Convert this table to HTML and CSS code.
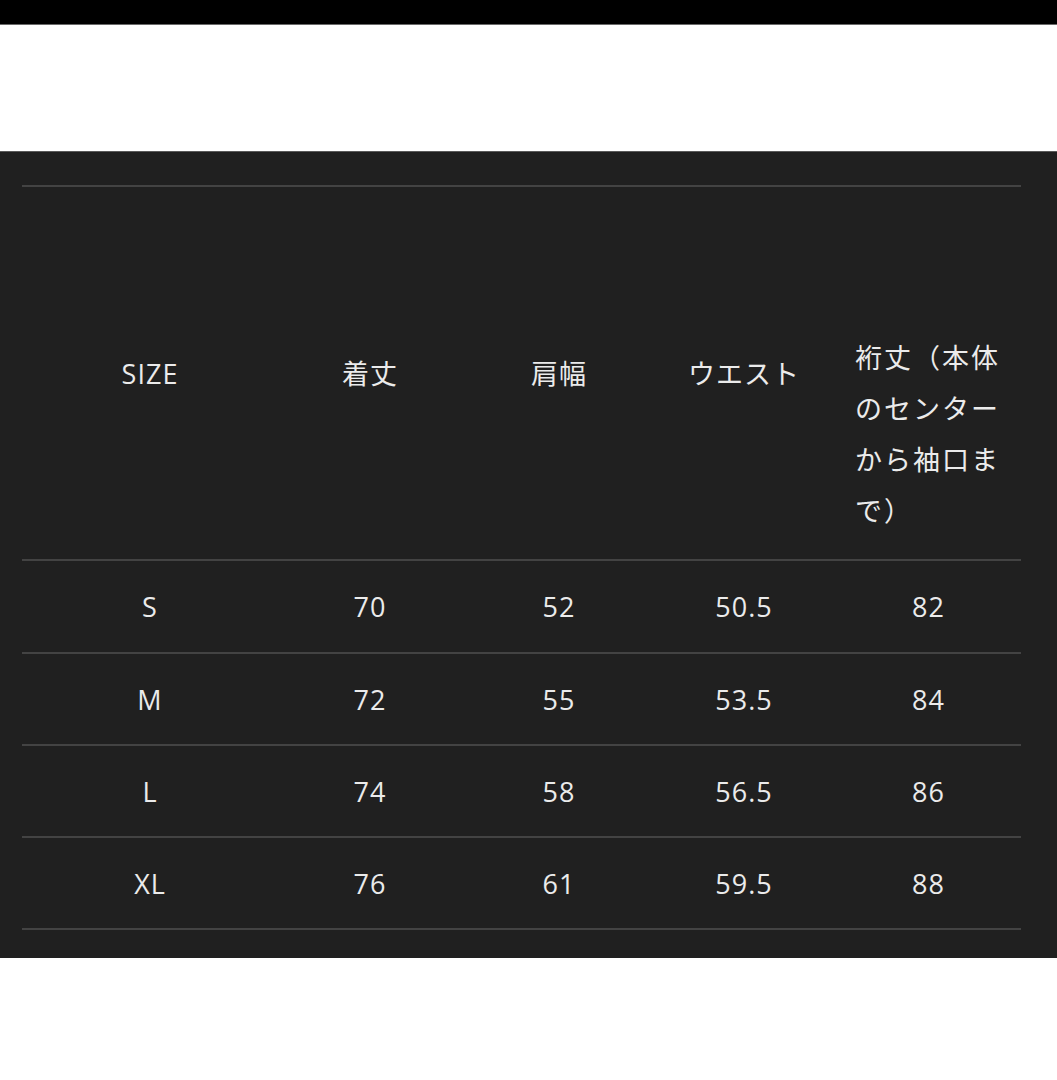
FILE: index.html
```html
<!DOCTYPE html>
<html lang="ja">
<head>
<meta charset="utf-8">
<title>Size chart</title>
<link rel="stylesheet" href="styles.css">
</head>
<body>
<div class="topbar"></div>
<div class="spacer"></div>
<section class="panel">
  <table class="sizes">
    <colgroup>
      <col class="c1"><col class="c2"><col class="c3"><col class="c4"><col class="c5">
    </colgroup>
    <thead>
      <tr>
        <th>SIZE</th>
        <th>着丈</th>
        <th>肩幅</th>
        <th>ウエスト</th>
        <th class="wrap">裄丈（本体のセンターから袖口まで）</th>
      </tr>
    </thead>
    <tbody>
      <tr><td>S</td><td>70</td><td>52</td><td>50.5</td><td>82</td></tr>
      <tr><td>M</td><td>72</td><td>55</td><td>53.5</td><td>84</td></tr>
      <tr><td>L</td><td>74</td><td>58</td><td>56.5</td><td>86</td></tr>
      <tr><td>XL</td><td>76</td><td>61</td><td>59.5</td><td>88</td></tr>
    </tbody>
  </table>
</section>
</body>
</html>
```
FILE: styles.css
```css
html, body {
  margin: 0;
  padding: 0;
  background: #ffffff;
}
body {
  font-family: "Open Sans", "Noto Sans CJK JP", sans-serif;
}
.topbar {
  height: 24px;
  background: #000000;
  border-bottom: 1px solid #6a6a6a;
}
.spacer {
  height: 126px;
}
.panel {
  background: #202020;
  border-top: 1px solid #5a5a5a;
  padding: 33px 36px 28px 22px;
}
.sizes {
  width: 999px;
  border-collapse: collapse;
  table-layout: fixed;
  color: #ebebeb;
  font-size: 27px;
  line-height: 51px;
  letter-spacing: 1px;
}
.c1 { width: 256px; }
.c2 { width: 184px; }
.c3 { width: 194px; }
.c4 { width: 176px; }
.c5 { width: 189px; }
.sizes th {
  font-weight: 400;
  text-align: center;
  vertical-align: middle;
  padding: 0;
  border-top: 2px solid #434343;
  border-bottom: 2px solid #434343;
}
.sizes th.wrap {
  text-align: left;
  vertical-align: top;
  padding: 145px 12px 23px 23px;
  letter-spacing: 2px;
}
.sizes td {
  text-align: center;
  padding: 20px 0 19px;
  border-bottom: 2px solid #434343;
}
.sizes tbody tr:first-child td {
  padding-bottom: 20px;
}
.sizes td:last-child {
  padding-left: 4px;
}
```
